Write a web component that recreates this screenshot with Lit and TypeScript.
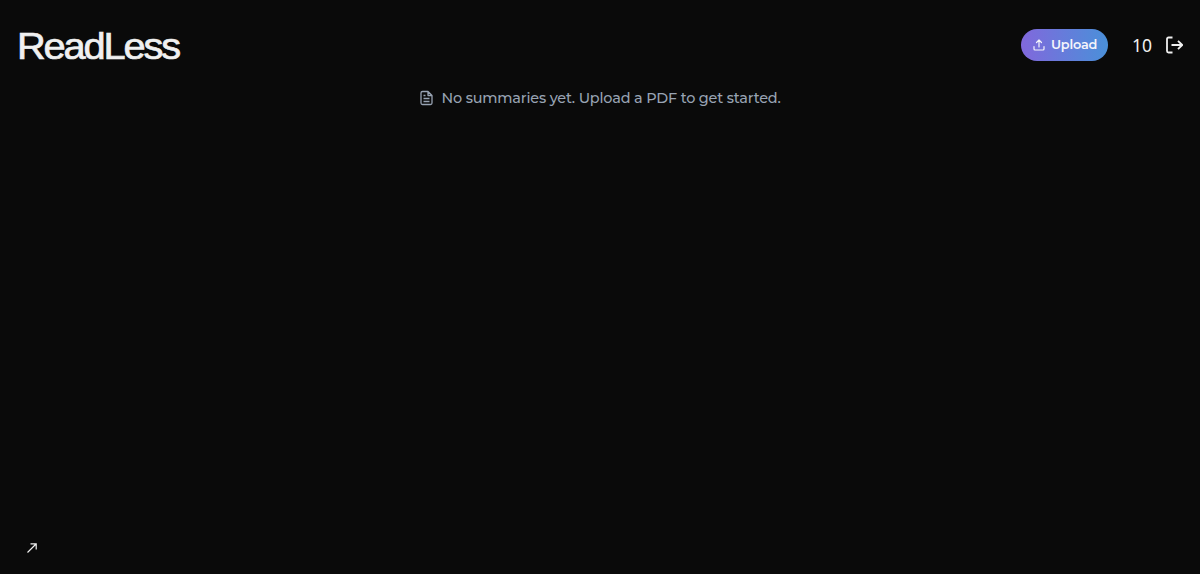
import { LitElement, html, css } from 'lit'
import { customElement, property } from 'lit/decorators.js'

@customElement('upload-button')
export class UploadButton extends LitElement {
  static styles = css`
    :host {
      display: block;
    }

    .button {
      display: flex;
      align-items: center;
      box-sizing: border-box;
      width: 87px;
      height: 32px;
      padding: 0 0 0 12px;
      gap: 6px;
      border: 0;
      border-radius: 16px;
      background: linear-gradient(90deg, #8168dc, #4a90d9);
      color: #f4f4fb;
      font-family: Montserrat, Inter, sans-serif;
      font-size: 12.8px;
      font-weight: 600;
      line-height: 20px;
      letter-spacing: -0.2px;
      white-space: nowrap;
    }

    .icon {
      flex: none;
    }
  `

  render() {
    return html`
      <button class="button">
        <svg class="icon" width="12" height="12" viewBox="0 0 24 24" fill="none" stroke="currentColor" stroke-width="2.4" stroke-linecap="round" stroke-linejoin="round">
          <path d="M2 15v5a2 2 0 0 0 2 2h16a2 2 0 0 0 2-2v-5M17 7l-5-5-5 5M12 2v14" />
        </svg>
        <span>Upload</span>
      </button>
    `
  }
}

@customElement('app-root')
export class AppRoot extends LitElement {
  static styles = css`
    :host {
      display: flex;
      flex-direction: column;
      box-sizing: border-box;
      height: 100vh;
      background: #0a0a0a;
      color: #f0f0f0;
      font-family: Montserrat, Inter, sans-serif;
      overflow: hidden;
    }

    .header {
      display: flex;
      align-items: center;
      justify-content: space-between;
      height: 90px;
      padding: 0 17px;
    }

    .logo {
      margin: 0;
      padding-top: 4px;
      font-family: 'Liberation Sans', Arial, sans-serif;
      font-size: 37px;
      font-weight: 400;
      line-height: 44px;
      letter-spacing: -2px;
      transform: scaleX(1.075);
      transform-origin: left;
      -webkit-text-stroke: 0.7px currentColor;
    }

    .actions {
      display: flex;
      align-items: center;
    }

    .credits {
      margin: 0 13px 0 24px;
      font-family: 'Noto Sans', sans-serif;
      font-size: 17.5px;
      line-height: 24px;
    }

    .logout {
      display: block;
    }

    .main {
      flex: 1;
    }

    .empty {
      display: flex;
      align-items: center;
      justify-content: center;
      gap: 7px;
      height: 16px;
      color: #98a3b3;
      font-size: 14.4px;
      font-weight: 500;
      line-height: 16px;
      letter-spacing: -0.17px;
      white-space: nowrap;
    }

    .footer {
      display: flex;
      padding: 0 26px 20px;
    }
  `

  @property({ type: Number }) credits = 10

  render() {
    return html`
      <header class="header">
        <h1 class="logo">ReadLess</h1>
        <div class="actions">
          <upload-button></upload-button>
          <span class="credits">${this.credits}</span>
          <svg class="logout" width="18" height="18" viewBox="0 0 18 18" fill="none" stroke="currentColor" stroke-width="1.8" stroke-linejoin="round">
            <path d="M7.500 1.500H3.500A1.500 1.500 0 0 0 2 3v12A1.500 1.500 0 0 0 3.500 16.500H7.500M6.500 9h10.500M13 4.800L17.200 9l-4.200 4.200" />
          </svg>
        </div>
      </header>

      <main class="main">
        <div class="empty">
          <svg width="15" height="16" viewBox="0 0 15 16" fill="none" stroke="currentColor" stroke-width="1.3" stroke-linejoin="round">
            <path d="M9 1.5H3.5A1.5 1.5 0 0 0 2 3v10a1.5 1.5 0 0 0 1.5 1.5h8A1.5 1.5 0 0 0 13 13V5.5zM9 1.5v4h4M4.5 5.5H6.5M4.5 8.5h6M4.5 11.5h6" />
          </svg>
          <span class="message">No summaries yet. Upload a PDF to get started.</span>
        </div>
      </main>

      <footer class="footer">
        <svg width="12" height="12" viewBox="0 0 12 12" fill="none" stroke="currentColor" stroke-width="1.2">
          <path d="M1.5 10.5L10 2M4.5 1.8H10.2V7.5" />
        </svg>
      </footer>
    `
  }
}

declare global {
  interface HTMLElementTagNameMap {
    'upload-button': UploadButton
    'app-root': AppRoot
  }
}
